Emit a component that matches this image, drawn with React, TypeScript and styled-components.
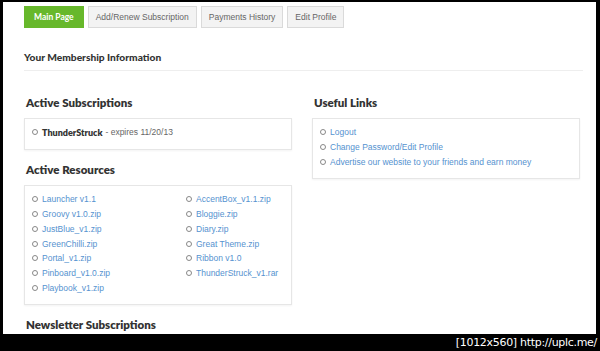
import { FC } from 'react';
import styled, { createGlobalStyle } from 'styled-components';

const GlobalStyle = createGlobalStyle`
    html, body {
        margin: 0;
        padding: 0;
        background: #000;
    }
    * {
        box-sizing: border-box;
    }
`;

const Shot = styled.div`
    width: 600px;
    height: 351px;
    background: #000;
    display: flex;
    flex-direction: column;
    overflow: hidden;
`;

const Frame = styled.div`
    margin: 2px 4px 0 3px;
    height: 332px;
    background: #fff;
    overflow: hidden;
    padding: 4px 13px 0 21px;
    font-family: "Liberation Sans", Arial, sans-serif;
`;

const Caption = styled.div`
    flex: 1;
    display: flex;
    align-items: center;
    justify-content: flex-end;
    padding-right: 3px;
    color: #fff;
    font-family: "DejaVu Sans", sans-serif;
    font-size: 11px;
    letter-spacing: -0.3px;
`;

const Tabs = styled.nav`
    display: flex;
    gap: 4px;
`;

const Tab = styled.a<{ $active?: boolean }>`
    height: 22px;
    display: flex;
    align-items: center;
    padding: 0 ${p => (p.$active ? '9px' : '7px')};
    font-size: 8.5px;
    font-weight: ${p => (p.$active ? 'bold' : 'normal')};
    font-family: ${p => (p.$active ? 'Lato, sans-serif' : '"Liberation Sans", Arial, sans-serif')};
    color: ${p => (p.$active ? '#fff' : '#666')};
    background: ${p => (p.$active ? '#67b82b' : '#f3f3f3')};
    border: 1px solid ${p => (p.$active ? '#67b82b' : '#dadada')};
    cursor: pointer;
`;

const PageTitle = styled.h1`
    margin: 22px 0 0;
    height: 14px;
    line-height: 14px;
    font-family: Lato, sans-serif;
    font-size: 10.2px;
    font-weight: 900;
    color: #333;
`;

const Divider = styled.div`
    margin-top: 6px;
    border-bottom: 1px solid #eeeeee;
`;

const Columns = styled.div`
    display: grid;
    grid-template-columns: 268px 268px;
    gap: 20px;
    margin-top: 25px;
`;

const Column = styled.div`
    display: flex;
    flex-direction: column;
`;

const SectionTitle = styled.h2`
    margin: 0 0 8px;
    padding-left: 2px;
    height: 14px;
    line-height: 14px;
    font-family: Lato, sans-serif;
    font-size: 11.5px;
    font-weight: 800;
    color: #333;
`;

const Box = styled.ul<{ $cols?: number }>`
    margin: 0 0 13px;
    padding: 6px 7px 9px;
    list-style: none;
    border: 1px solid #e6e6e6;
    box-shadow: 0 1px 2px rgba(0, 0, 0, 0.05);
    display: grid;
    grid-template-columns: ${p => (p.$cols === 2 ? '154px 1fr' : '1fr')};
    grid-auto-flow: ${p => (p.$cols === 2 ? 'column' : 'row')};
    grid-template-rows: ${p => (p.$cols === 2 ? 'repeat(7, 14.8px)' : 'none')};
`;

const Item = styled.li`
    display: flex;
    align-items: center;
    height: 14.8px;
    font-size: 8.5px;
    color: #666;
    white-space: nowrap;

    &::before {
        content: '';
        width: 4px;
        height: 4px;
        border: 1px solid #888;
        border-radius: 50%;
        margin: 0 4px 0 0;
        flex-shrink: 0;
    }
`;

const Link = styled.a`
    color: #5592cf;
    cursor: pointer;
`;

const Strong = styled.b`
    font-family: Lato, sans-serif;
    font-size: 9px;
    font-weight: 800;
    color: #333;
    margin-right: 3px;
`;

const leftResources = [
    'Launcher v1.1',
    'Groovy v1.0.zip',
    'JustBlue_v1.zip',
    'GreenChilli.zip',
    'Portal_v1.zip',
    'Pinboard_v1.0.zip',
    'Playbook_v1.zip',
];

const rightResources = [
    'AccentBox_v1.1.zip',
    'Bloggie.zip',
    'Diary.zip',
    'Great Theme.zip',
    'Ribbon v1.0',
    'ThunderStruck_v1.rar',
];

const usefulLinks = [
    'Logout',
    'Change Password/Edit Profile',
    'Advertise our website to your friends and earn money',
];

const App: FC = () => {
    return (
        <>
            <GlobalStyle />
            <Shot>
                <Frame>
                    <Tabs>
                        <Tab $active>Main Page</Tab>
                        <Tab>Add/Renew Subscription</Tab>
                        <Tab>Payments History</Tab>
                        <Tab>Edit Profile</Tab>
                    </Tabs>

                    <PageTitle>Your Membership Information</PageTitle>
                    <Divider />

                    <Columns>
                        <Column>
                            <SectionTitle>Active Subscriptions</SectionTitle>
                            <Box>
                                <Item>
                                    <Strong>ThunderStruck</Strong> - expires 11/20/13
                                </Item>
                            </Box>

                            <SectionTitle>Active Resources</SectionTitle>
                            <Box $cols={2}>
                                {[...leftResources, ...rightResources].map(name => (
                                    <Item key={name}>
                                        <Link>{name}</Link>
                                    </Item>
                                ))}
                            </Box>

                            <SectionTitle>Newsletter Subscriptions</SectionTitle>
                        </Column>

                        <Column>
                            <SectionTitle>Useful Links</SectionTitle>
                            <Box>
                                {usefulLinks.map(link => (
                                    <Item key={link}>
                                        <Link>{link}</Link>
                                    </Item>
                                ))}
                            </Box>
                        </Column>
                    </Columns>
                </Frame>
                <Caption>[1012x560] http://uplc.me/</Caption>
            </Shot>
        </>
    );
};

export default App;
